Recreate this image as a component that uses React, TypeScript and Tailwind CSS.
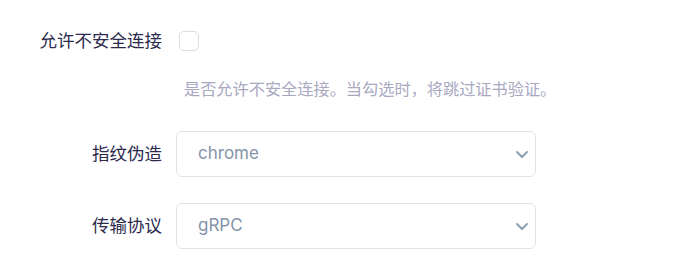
import { useState } from 'react';

const fontStack = '"Inter", "Noto Sans CJK SC", sans-serif';

function Chevron() {
  return (
    <svg width="12" height="7" viewBox="0 0 12 7" fill="none" className="shrink-0">
      <path d="M1 1l5 5 5-5" stroke="#8a9ab0" strokeWidth="1.8" strokeLinecap="round" strokeLinejoin="round" />
    </svg>
  );
}

function SelectField({ label, value }: { label: string; value: string }) {
  return (
    <div className="flex items-center">
      <label className="w-[162px] text-right text-[17.5px] text-[#2b2a4c] shrink-0">{label}</label>
      <div className="ml-[14px] w-[360px] h-[46px] flex items-center justify-between border border-[#e2e2ea] rounded-[6px] pl-[21px] pr-[7px] bg-white">
        <span className="text-[17px] text-[#8494a8]">{value}</span>
        <Chevron />
      </div>
    </div>
  );
}

export default function App() {
  const [insecure, setInsecure] = useState(false);

  return (
    <div className="w-[690px] h-[269px] bg-white overflow-hidden" style={{ fontFamily: fontStack }}>
      <div className="pt-[30px]">
        <div className="flex items-center h-[22px]">
          <label className="w-[162px] text-right text-[17.5px] text-[#2b2a4c] shrink-0">允许不安全连接</label>
          <button
            onClick={() => setInsecure(prev => !prev)}
            className="ml-[17px] w-[20px] h-[20px] rounded-[5px] border border-[#dcdce6] bg-white"
          >
            {insecure && <span className="block w-full h-full rounded-[4px] bg-[#6366f1]" />}
          </button>
        </div>
        <p className="ml-[184px] mt-[27px] text-[16.2px] leading-[20px] text-[#a8a8bf]">
          是否允许不安全连接。当勾选时，将跳过证书验证。
        </p>
        <div className="mt-[32px] flex flex-col gap-[26px]">
          <SelectField label="指纹伪造" value="chrome" />
          <SelectField label="传输协议" value="gRPC" />
        </div>
      </div>
    </div>
  );
}
